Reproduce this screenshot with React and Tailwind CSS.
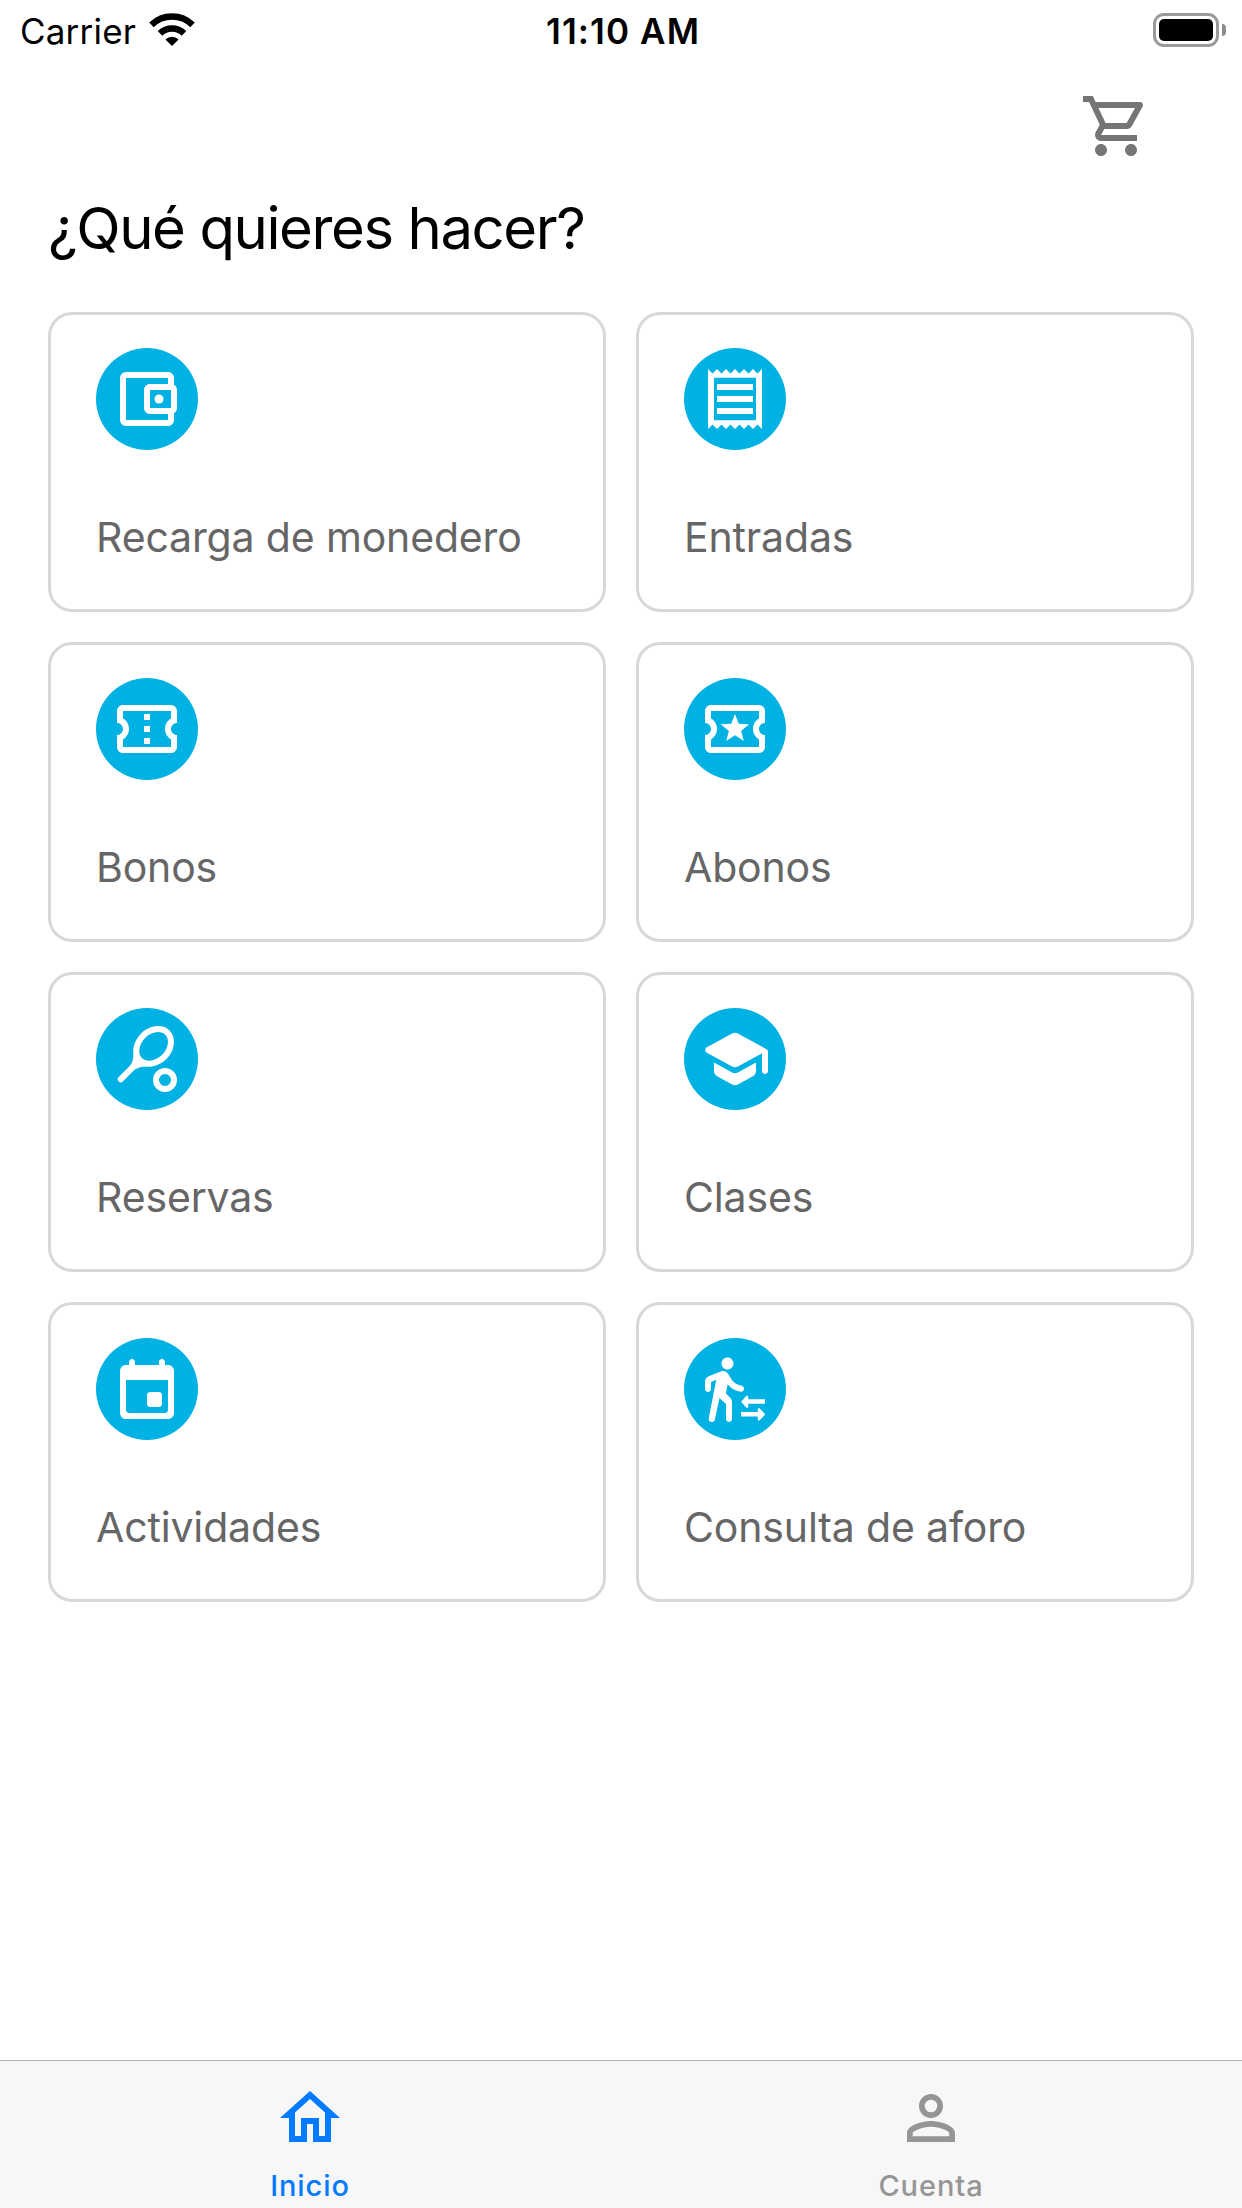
import React, { useState } from 'react';
import {
  MdOutlineAccountBalanceWallet,
  MdOutlineConfirmationNumber,
  MdOutlineHome,
  MdOutlineLocalActivity,
  MdOutlineReceipt,
  MdOutlineShoppingCart,
  MdPersonOutline,
} from 'react-icons/md';

// Rounded icons that react-icons does not ship
function TennisIcon({ className }) {
  return (
    <svg viewBox="0 0 24 24" fill="currentColor" className={className}>
      <path d="M19.52 2.49C17.18.15 12.9.62 9.97 3.55c-1.6 1.6-2.52 3.87-2.54 5.46-.02 1.58.26 3.89-1.35 5.5l-3.53 3.53a1 1 0 0 0 1.42 1.42l3.53-3.53c1.61-1.61 3.92-1.33 5.5-1.35 1.58-.02 3.86-.94 5.46-2.54 2.92-2.93 3.4-7.21 1.06-9.55zm-9.2 9.19c-1.53-1.53-1.05-4.61 1.06-6.72s5.18-2.59 6.72-1.06c1.53 1.53 1.05 4.61-1.06 6.72s-5.18 2.59-6.72 1.06z" />
      <circle cx="18" cy="19" r="3" fill="none" stroke="currentColor" strokeWidth="2" />
    </svg>
  );
}

function SchoolIcon({ className }) {
  return (
    <svg viewBox="0 0 24 24" fill="currentColor" className={className}>
      <path d="M5 13.18v2.81c0 .73.4 1.41 1.04 1.76l5 2.73c.6.33 1.32.33 1.92 0l5-2.73c.64-.35 1.04-1.03 1.04-1.76v-2.81l-6.04 3.3c-.6.33-1.32.33-1.92 0L5 13.18zm6.04-9.66-8.43 4.6c-.69.38-.69 1.38 0 1.76l8.43 4.6c.6.33 1.32.33 1.92 0L21 10.09V16c0 .55.45 1 1 1s1-.45 1-1V9.59c0-.37-.2-.7-.52-.88l-9.52-5.19c-.6-.32-1.32-.32-1.92 0z" />
    </svg>
  );
}

function EventIcon({ className }) {
  return (
    <svg viewBox="0 0 24 24" fill="currentColor" className={className}>
      <path d="M16 13h-3c-.55 0-1 .45-1 1v3c0 .55.45 1 1 1h3c.55 0 1-.45 1-1v-3c0-.55-.45-1-1-1zm0-10v1H8V3c0-.55-.45-1-1-1s-1 .45-1 1v1H5c-1.1 0-2 .9-2 2v14c0 1.1.9 2 2 2h14c1.1 0 2-.9 2-2V6c0-1.1-.9-2-2-2h-1V3c0-.55-.45-1-1-1s-1 .45-1 1zm2 17H6c-.55 0-1-.45-1-1V9h14v10c0 .55-.45 1-1 1z" />
    </svg>
  );
}

function CapacityIcon({ className }) {
  return (
    <svg viewBox="0 0 24 24" fill="currentColor" className={className}>
      <path d="M9.5 5.5c1.1 0 2-.9 2-2s-.9-2-2-2-2 .9-2 2 .9 2 2 2zM5.75 8.9 3.23 21.81c-.12.62.35 1.19.98 1.19h.08c.47 0 .88-.32.98-.78L6.85 15 9 17v5c0 .55.45 1 1 1s1-.45 1-1v-5.64c0-.55-.22-1.07-.62-1.45L8.95 13.4l.6-3c1.07 1.32 2.57 2.23 4.31 2.51.6.09 1.14-.39 1.14-1 0-.49-.36-.9-.84-.98-1.53-.25-2.8-1.15-3.46-2.33l-.95-1.6C9.35 6.35 8.7 6 8 6c-.25 0-.5.05-.75.15L3.22 7.78C2.48 8.09 2 8.81 2 9.62V12c0 .55.45 1 1 1s1-.45 1-1V9.65l1.75-.75z" />
      <path d="M22 15.45h-5.6v-.84c0-.34-.41-.51-.65-.27l-1.5 1.65a.37.37 0 0 0 0 .52l1.5 1.65c.24.24.65.07.65-.27v-.94H22v-1.5zM14 19.7h5.6v-.94c0-.34.41-.51.65-.27l1.6 1.7c.15.15.15.38 0 .53l-1.6 1.7c-.24.24-.65.07-.65-.27v-.95H14v-1.5z" />
    </svg>
  );
}

function WifiIcon({ className }) {
  return (
    <svg viewBox="0 0 46 33" className={className}>
      <path d="M2.5 11.8a29.5 29.5 0 0 1 41 0M11 20.3a17.3 17.3 0 0 1 24 0" fill="none" stroke="currentColor" strokeWidth="6.6" />
      <path d="M23 33l-6.6-6.6a9.6 9.6 0 0 1 13.2 0z" fill="currentColor" />
    </svg>
  );
}

const OPTIONS = [
  { label: 'Recarga de monedero', icon: MdOutlineAccountBalanceWallet },
  { label: 'Entradas', icon: MdOutlineReceipt },
  { label: 'Bonos', icon: MdOutlineConfirmationNumber },
  { label: 'Abonos', icon: MdOutlineLocalActivity },
  { label: 'Reservas', icon: TennisIcon },
  { label: 'Clases', icon: SchoolIcon },
  { label: 'Actividades', icon: EventIcon },
  { label: 'Consulta de aforo', icon: CapacityIcon },
];

const TABS = [
  { id: 'home', label: 'Inicio', icon: MdOutlineHome },
  { id: 'account', label: 'Cuenta', icon: MdPersonOutline },
];

function StatusBar() {
  return (
    <div className="h-[60px] flex items-start justify-between px-[16px] text-black">
      <div className="flex-1 flex items-start pl-[4px]">
        <span className="w-[129px] pt-[11px] text-[35px] leading-[40px] tracking-[0.2px] whitespace-nowrap">Carrier</span>
        <WifiIcon className="mt-[13px] w-[46px] h-[33px]" />
      </div>
      <span className="pt-[11px] text-[35px] leading-[40px] tracking-[1.1px] font-semibold whitespace-nowrap">11:10 AM</span>
      <div className="flex-1 flex items-center justify-end gap-[3px] mt-[13px]">
        <div className="w-[66px] h-[34px] rounded-[11px] border-3 border-[#9a9a9a] p-[3px]">
          <div className="h-full rounded-[5px] bg-black" />
        </div>
        <div className="w-[4px] h-[12px] rounded-r-full bg-[#8c8c8c]" />
      </div>
    </div>
  );
}

function OptionCard({ label, icon: Icon }) {
  return (
    <button className="h-[300px] rounded-[24px] border-3 border-[#d8d8d8] px-[45px] pt-[33px] flex flex-col items-start bg-white">
      <span className="size-[102px] rounded-full bg-[#00b1e3] text-white flex items-center justify-center">
        <Icon className="size-[72px]" />
      </span>
      <span className="mt-[62px] text-[41px] leading-[50px] tracking-[-0.15px] text-[#666666] whitespace-nowrap">{label}</span>
    </button>
  );
}

export default function App() {
  const [currentTab, setCurrentTab] = useState('home');

  return (
    <div className="w-[1242px] h-[2208px] flex flex-col bg-white font-[Inter,'Liberation_Sans',sans-serif] overflow-hidden">
      <StatusBar />

      {/* Header */}
      <div className="h-[132px] pt-[30px] pr-[90px] flex justify-end items-start">
        <button className="text-[#757575]">
          <MdOutlineShoppingCart className="size-[72px]" />
        </button>
      </div>

      {/* Options */}
      <div className="flex-1 px-[48px]">
        <h1 className="text-[58px] leading-[72px] tracking-[-1.4px] text-black whitespace-nowrap">¿Qué quieres hacer?</h1>
        <div className="mt-[48px] grid grid-cols-2 gap-[30px]">
          {OPTIONS.map((option) => (
            <OptionCard key={option.label} label={option.label} icon={option.icon} />
          ))}
        </div>
      </div>

      {/* Tab bar */}
      <div className="h-[148px] border-t border-[#b2b2b2] bg-[#f7f7f7] flex">
        {TABS.map((tab) => (
          <button
            key={tab.id}
            onClick={() => setCurrentTab(tab.id)}
            className={`flex-1 flex flex-col items-center pt-[21px] pr-px ${
              currentTab === tab.id ? 'text-[#007aff]' : 'text-[#959595]'
            }`}
          >
            <tab.icon className="size-[72px]" />
            <span className="mt-[14px] text-[29px] leading-[36px] tracking-[0.9px] font-medium whitespace-nowrap">{tab.label}</span>
          </button>
        ))}
      </div>
    </div>
  );
}
